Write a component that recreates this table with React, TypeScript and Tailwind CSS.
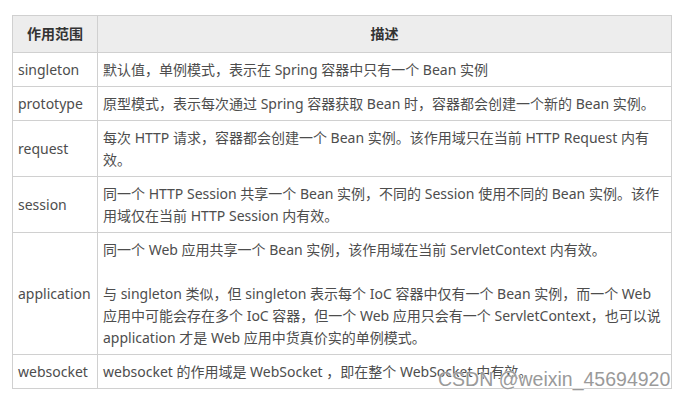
import * as React from "react";

const font = "font-['Noto_Sans','Noto_Sans_CJK_SC',sans-serif]";

interface Row {
  scope: string;
  lines: string[];
}

const rows: Row[] = [
  { scope: "singleton", lines: ["默认值，单例模式，表示在 Spring 容器中只有一个 Bean 实例"] },
  {
    scope: "prototype",
    lines: ["原型模式，表示每次通过 Spring 容器获取 Bean 时，容器都会创建一个新的 Bean 实例。"],
  },
  {
    scope: "request",
    lines: ["每次 HTTP 请求，容器都会创建一个 Bean 实例。该作用域只在当前 HTTP Request 内有", "效。"],
  },
  {
    scope: "session",
    lines: [
      "同一个 HTTP Session 共享一个 Bean 实例，不同的 Session 使用不同的 Bean 实例。该作",
      "用域仅在当前 HTTP Session 内有效。",
    ],
  },
  {
    scope: "application",
    lines: [
      "同一个 Web 应用共享一个 Bean 实例，该作用域在当前 ServletContext 内有效。",
      "",
      "与 singleton 类似，但 singleton 表示每个 IoC 容器中仅有一个 Bean 实例，而一个 Web",
      "应用中可能会存在多个 IoC 容器，但一个 Web 应用只会有一个 ServletContext，也可以说",
      "application 才是 Web 应用中货真价实的单例模式。",
    ],
  },
  { scope: "websocket", lines: ["websocket 的作用域是 WebSocket ，即在整个 WebSocket 中有效。"] },
];

function Line({ text }: { text: string }) {
  return <div className="h-[22px] leading-[22px] whitespace-nowrap">{text}</div>;
}

export default function App() {
  return (
    <div className={`w-[685px] h-[399px] bg-white overflow-hidden relative ${font}`}>
      <div className="pt-[15px] pl-[12px]">
        <table className="w-[660px] border-collapse text-[14px] text-[#4d4d4d]">
          <thead>
            <tr className="bg-[#ededed]">
              <th className="w-[85px] border border-[#d0d0d0] py-[7px] text-center font-bold text-[#333]">
                <Line text="作用范围" />
              </th>
              <th className="border border-[#d0d0d0] py-[7px] text-center font-bold text-[#333]">
                <Line text="描述" />
              </th>
            </tr>
          </thead>
          <tbody>
            {rows.map((r) => (
              <tr key={r.scope}>
                <td className="border border-[#d0d0d0] px-[5px] py-[5.5px] align-middle">
                  <Line text={r.scope} />
                </td>
                <td className="border border-[#d0d0d0] px-[5px] py-[5.5px]">
                  {r.lines.map((l, i) => (
                    <Line key={i} text={l} />
                  ))}
                </td>
              </tr>
            ))}
          </tbody>
        </table>
        <div className="mt-[10px] w-[660px] h-[6px] bg-[#f4f4f4]" />
      </div>
      <div className="absolute left-[438px] top-[367px] font-['Liberation_Sans',sans-serif] text-[19.5px] leading-[24px] text-[#9a9a9a] [-webkit-text-stroke:0.6px_#ffffff] [paint-order:stroke]">
        CSDN @weixin_45694920
      </div>
    </div>
  );
}
